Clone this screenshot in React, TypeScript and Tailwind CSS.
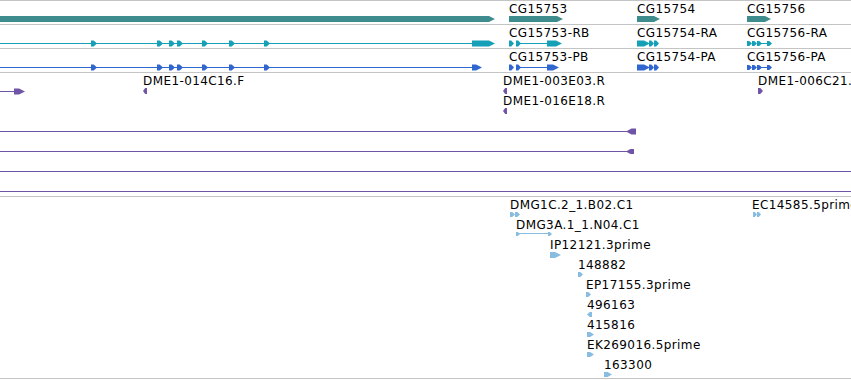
import React from "react";

const FONT = "'DejaVu Sans', 'Liberation Sans', sans-serif";

const C = {
  gene: "#3f8c8e",
  rna: "#15a0b8",
  prot: "#2f66cf",
  clone: "#7055a7",
  est: "#88bce0",
};

// small exon arrow pointing right, x = left edge, y = centre line
function Fwd({ x, y, w = 6, h = 3, color }: { x: number; y: number; w?: number; h?: number; color: string }) {
  return (
    <polygon
      points={`${x},${y - h} ${x + w * 0.45},${y - h} ${x + w},${y} ${x + w * 0.45},${y + h} ${x},${y + h}`}
      fill={color}
    />
  );
}

function Rev({ x, y, w = 5, h = 3, color }: { x: number; y: number; w?: number; h?: number; color: string }) {
  return (
    <polygon
      points={`${x},${y} ${x + w * 0.55},${y - h} ${x + w},${y - h} ${x + w},${y + h} ${x + w * 0.55},${y + h}`}
      fill={color}
    />
  );
}

function Bar({ x1, x2, y, h = 3, color }: { x1: number; x2: number; y: number; h?: number; color: string }) {
  return (
    <polygon
      points={`${x1},${y - h} ${x2 - 6},${y - h} ${x2},${y} ${x2 - 6},${y + h} ${x1},${y + h}`}
      fill={color}
    />
  );
}

function Line({ x1, x2, y, color }: { x1: number; x2: number; y: number; color: string }) {
  return <rect x={x1} y={Math.floor(y)} width={x2 - x1} height={1} fill={color} shapeRendering="crispEdges" />;
}

function Label({ x, y, children }: { x: number; y: number; children: React.ReactNode }) {
  return (
    <text x={x} y={y} fontSize={12} fontFamily={FONT} letterSpacing={0.4} fill="#000">
      {children}
    </text>
  );
}

function Track({ top, height, children, first }: { top: number; height: number; children: React.ReactNode; first?: boolean }) {
  return (
    <div className={`border-b border-[#c4c4c4] ${first ? "border-t" : ""}`} style={{ height: height + 1 + (first ? 1 : 0) }}>
      <svg width={851} height={height} className="block">
        <g transform={`translate(0,${-top})`}>{children}</g>
      </svg>
    </div>
  );
}

const smallExons = [91, 157, 169, 177, 202, 229, 264];

function Transcript({ y, color, endExon, suffix }: { y: number; color: string; endExon: [number, number]; suffix: [string, string, string] }) {
  const ly = y - 6;
  return (
    <>
      <Line x1={0} x2={endExon[0]} y={y} color={color} />
      {smallExons.map((x) => (
        <Fwd key={x} x={x} y={y + 0.5} color={color} />
      ))}
      <Bar x1={endExon[0]} x2={endExon[1]} y={y + 0.5} color={color} />

      <Label x={509} y={ly}>{suffix[0]}</Label>
      <Fwd x={509} y={y + 0.5} w={5} color={color} />
      <Fwd x={516} y={y + 0.5} w={5} color={color} />
      <Line x1={520} x2={548} y={y} color={color} />
      <Bar x1={547} x2={suffix[0].endsWith("RB") ? 562 : 559} y={y + 0.5} color={color} />

      <Label x={637} y={ly}>{suffix[1]}</Label>
      <Bar x1={637} x2={650} y={y + 0.5} color={color} />
      <Fwd x={649} y={y + 0.5} w={5} color={color} />
      <Fwd x={654} y={y + 0.5} w={5} color={color} />

      <Label x={747} y={ly}>{suffix[2]}</Label>
      <Fwd x={747} y={y + 0.5} w={5} h={2.5} color={color} />
      <Fwd x={752} y={y + 0.5} w={5} h={2.5} color={color} />
      <Fwd x={757} y={y + 0.5} w={5} h={2.5} color={color} />
      <Line x1={760} x2={768} y={y} color={color} />
      <Fwd x={767} y={y + 0.5} w={5} h={2.5} color={color} />
    </>
  );
}

const ests = [
  { label: "IP12121.3prime", x: 550, y: 249, glyph: "bar", w: 11 },
  { label: "148882", x: 578, y: 269, glyph: "fwd", w: 5 },
  { label: "EP17155.3prime", x: 586, y: 289, glyph: "fwd", w: 5 },
  { label: "496163", x: 587, y: 309, glyph: "rev", w: 5 },
  { label: "415816", x: 587, y: 329, glyph: "fwd", w: 7 },
  { label: "EK269016.5prime", x: 587, y: 349, glyph: "fwd", w: 7 },
  { label: "163300", x: 604, y: 369, glyph: "fwd", w: 8 },
];

export default function App() {
  return (
    <div className="w-[851px] h-[380px] overflow-hidden bg-white">
      {/* genes */}
      <Track top={1} height={23} first>
        <Bar x1={0} x2={495} y={19} color={C.gene} />
        <Label x={509} y={13}>CG15753</Label>
        <Bar x1={509} x2={563} y={19} color={C.gene} />
        <Label x={637} y={13}>CG15754</Label>
        <Bar x1={637} x2={660} y={19} color={C.gene} />
        <Label x={747} y={13}>CG15756</Label>
        <Bar x1={747} x2={771} y={19} color={C.gene} />
      </Track>

      {/* transcripts */}
      <Track top={25} height={23}>
        <Transcript y={43} color={C.rna} endExon={[472, 495]} suffix={["CG15753-RB", "CG15754-RA", "CG15756-RA"]} />
      </Track>

      {/* proteins */}
      <Track top={49} height={23}>
        <Transcript y={67} color={C.prot} endExon={[472, 482]} suffix={["CG15753-PB", "CG15754-PA", "CG15756-PA"]} />
      </Track>

      {/* clones */}
      <Track top={73} height={123}>
        <Line x1={0} x2={15} y={91} color={C.clone} />
        <Bar x1={14} x2={25} y={91.5} color={C.clone} />
        <Label x={143} y={85}>DME1-014C16.F</Label>
        <Rev x={143} y={91} w={4} color={C.clone} />
        <Label x={503} y={85}>DME1-003E03.R</Label>
        <Rev x={503} y={91} w={4} color={C.clone} />
        <Label x={503} y={105}>DME1-016E18.R</Label>
        <Rev x={503} y={111} w={4} color={C.clone} />
        <Label x={758} y={85}>DME1-006C21.F</Label>
        <Fwd x={758} y={91} w={5} color={C.clone} />

        <Line x1={0} x2={628} y={131} color={C.clone} />
        <Rev x={626} y={131.5} w={10} color={C.clone} />
        <Line x1={0} x2={628} y={151} color={C.clone} />
        <Rev x={626} y={151.5} w={8} h={2.5} color={C.clone} />
        <Line x1={0} x2={851} y={171} color={C.clone} />
        <Line x1={0} x2={851} y={191} color={C.clone} />
      </Track>

      {/* ESTs */}
      <Track top={197} height={181}>
        <Label x={510} y={209}>DMG1C.2_1.B02.C1</Label>
        <Fwd x={510} y={214.5} w={5} h={2.5} color={C.est} />
        <Fwd x={515} y={214.5} w={5} h={2.5} color={C.est} />

        <Label x={516} y={229}>DMG3A.1_1.N04.C1</Label>
        <Fwd x={516} y={234} w={4} h={2} color={C.est} />
        <Line x1={519} x2={550} y={233} color={C.est} />
        <Fwd x={548} y={234} w={4} h={2} color={C.est} />

        {ests.map((e) => (
          <g key={e.label}>
            <Label x={e.x} y={e.y}>{e.label}</Label>
            {e.glyph === "bar" && <Bar x1={e.x} x2={e.x + e.w} y={e.y + 6} color={C.est} />}
            {e.glyph === "fwd" && <Fwd x={e.x} y={e.y + 5.5} w={e.w} h={2.5} color={C.est} />}
            {e.glyph === "rev" && <Rev x={e.x} y={e.y + 5.5} w={e.w} h={2.5} color={C.est} />}
          </g>
        ))}

        <Label x={752} y={209}>EC14585.5prime</Label>
        <Fwd x={753} y={214.5} w={4} h={2.5} color={C.est} />
        <Fwd x={757} y={214.5} w={4} h={2.5} color={C.est} />
      </Track>
    </div>
  );
}
